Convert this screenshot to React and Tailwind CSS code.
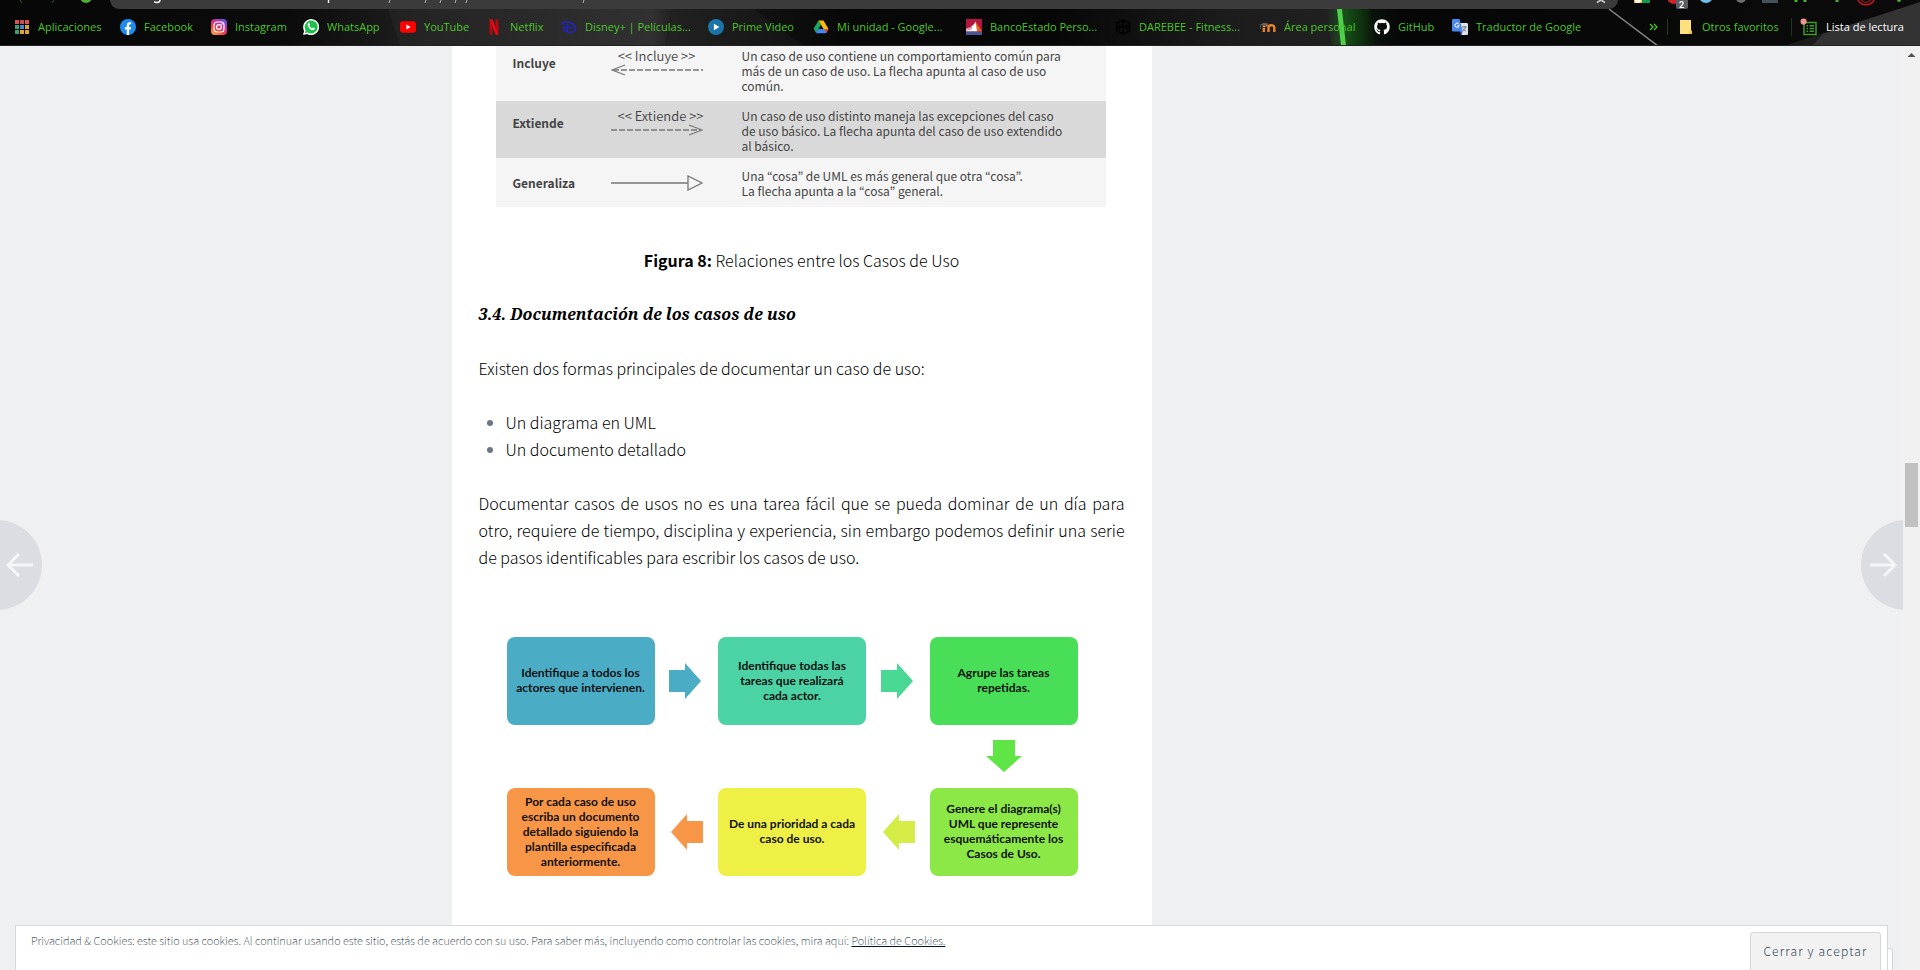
import { FaGithub } from "react-icons/fa";

const iconClass = "h-4 w-4 shrink-0";

function AppsIcon() {
  const colors = ["#d9534f", "#c8504a", "#d9534f", "#3f9e6b", "#4285d4", "#e0a52c", "#3f9e6b", "#e0a52c", "#e0a52c"];
  return (
    <svg viewBox="0 0 16 16" className={iconClass} aria-hidden="true">
      {colors.map((c, i) => (
        <rect key={i} x={1 + (i % 3) * 5} y={1 + Math.floor(i / 3) * 5} width="4" height="4" fill={c} />
      ))}
    </svg>
  );
}

function FacebookIcon() {
  return (
    <svg viewBox="0 0 16 16" className={iconClass} aria-hidden="true">
      <circle cx="8" cy="8" r="8" fill="#1c8cf0" />
      <path d="M6.8 16v-5.6H4.9V8.1h1.9V6.4c0-2 1.1-3.1 2.9-3.1.8 0 1.5.1 1.5.1v1.8h-.9c-.9 0-1.2.6-1.2 1.2v1.7h2.1l-.4 2.3H9.1V16z" fill="#fff" />
    </svg>
  );
}

function InstagramIcon() {
  return (
    <svg viewBox="0 0 16 16" className={iconClass} aria-hidden="true">
      <defs>
        <linearGradient id="ig" x1="0" y1="1" x2="0.7" y2="0">
          <stop offset="0" stopColor="#fdc04e" />
          <stop offset="0.4" stopColor="#f0453c" />
          <stop offset="0.7" stopColor="#c4309a" />
          <stop offset="1" stopColor="#6a4fd0" />
        </linearGradient>
      </defs>
      <rect width="16" height="16" rx="4" fill="url(#ig)" />
      <rect x="3" y="3" width="10" height="10" rx="3" fill="none" stroke="#fff" strokeWidth="1.2" />
      <circle cx="8" cy="8" r="2.4" fill="none" stroke="#fff" strokeWidth="1.2" />
      <circle cx="11" cy="5" r="0.7" fill="#fff" />
    </svg>
  );
}

function WhatsAppIcon() {
  return (
    <svg viewBox="0 0 16 16" className={iconClass} aria-hidden="true">
      <path d="M0 16l1.1-4.1A8 8 0 1 1 4.1 15z" fill="#fff" />
      <path d="M1.9 14.1l.8-2.6A6.5 6.5 0 1 1 4.6 13.4z" fill="#21c04e" />
      <path d="M5.2 4.1c.5-.5 1-.3 1.2.2l.5 1.2c.1.4-.6 1-.6 1.2.5 1.1 1.5 2 2.7 2.5.3.1.8-.9 1.1-.8l1.5.7c.5.3-.1 1.5-.7 1.8-1.2.6-3.1-.2-4.4-1.5C5 8 3.9 5.6 5.2 4.1z" fill="#fff" />
    </svg>
  );
}

function YouTubeIcon() {
  return (
    <svg viewBox="0 0 16 16" className={iconClass} aria-hidden="true">
      <rect x="0" y="2.3" width="16" height="11.4" rx="2.6" fill="#f00" />
      <path d="M6.4 5.6v4.8L10.6 8z" fill="#fff" />
    </svg>
  );
}

function NetflixIcon() {
  return (
    <svg viewBox="0 0 16 16" className={iconClass} aria-hidden="true">
      <path d="M3.5 0.5h3v15l-3 .3zM9.5 0.5h3v15.3l-3-.3z" fill="#b5090f" />
      <path d="M3.5 0.5h3l6 15.3-3-.3z" fill="#e50914" />
    </svg>
  );
}

function DisneyIcon() {
  return (
    <svg viewBox="0 0 16 16" className={iconClass} aria-hidden="true">
      <path d="M1.5 3.8C5 1.5 14.5 4 14.5 9.6c0 3.7-5 4.6-8.3 3.2C3.5 11.6 1.5 9.7 3 8.7c2-1.2 6-.8 8 .6M6 5.6c.4 2.2.5 4.2.3 6.4M1 4.5l1.5 1" fill="none" stroke="#2222c4" strokeWidth="1.5" strokeLinecap="round" />
    </svg>
  );
}

function PrimeIcon() {
  return (
    <svg viewBox="0 0 16 16" className={iconClass} aria-hidden="true">
      <circle cx="8" cy="8" r="8" fill="#1b74a8" />
      <path d="M5.9 4.7v6.6L11.4 8z" fill="#fff" />
    </svg>
  );
}

function DriveIcon() {
  return (
    <svg viewBox="0 0 16 16" className={iconClass} aria-hidden="true">
      <path d="M5.5 1.5L8 5.8 3.2 14 .5 9.8z" fill="#1da462" />
      <path d="M5.5 1.5h5l5 8.4h-5z" fill="#fbbc05" />
      <path d="M5.5 9.9h10L13 14.2H3z" fill="#4285f4" />
      <path d="M13 14.2l2.5-4.3h-4z" fill="#ea4335" />
    </svg>
  );
}

function BancoIcon() {
  return (
    <svg viewBox="0 0 16 16" className={iconClass} aria-hidden="true">
      <rect width="16" height="16" fill="#b3163c" />
      <path d="M9.5 2.5L16 12.5H8z" fill="#e8641e" />
      <path d="M9.5 2.5c-1 3-4 6-9.5 7v3h11z" fill="#fff" />
      <path d="M0 9.5l6-1M0 11.2l6-1.5" stroke="#b3163c" strokeWidth="0.6" />
      <rect y="12.5" width="16" height="3.5" fill="#4b5596" />
    </svg>
  );
}

function DarebeeIcon() {
  return (
    <svg viewBox="0 0 16 16" className={iconClass} aria-hidden="true">
      <path d="M8 .8l6.500 3.500v7.400L8 15.200l-6.500-3.500V4.300zM8 .8v14.400M4.500 5v6.500M11.500 5v6.500M1.500 8h13" fill="none" stroke="#000" strokeWidth="1.6" />
    </svg>
  );
}

function MoodleIcon() {
  return (
    <svg viewBox="0 0 16 16" className={iconClass} aria-hidden="true">
      <path d="M3.8 13V8.5M8.5 13V8.2c0-2.6 5.8-2.6 5.8 0V13M3.8 8c0-1.5 2-2.2 3.4-1.3" fill="none" stroke="#e8842a" strokeWidth="2.4" />
      <path d="M0 5.8l4-2 4.5.9-3 2.3-3-.4z" fill="#6b6055" />
      <path d="M.6 6v4" stroke="#6b6055" strokeWidth="0.8" />
    </svg>
  );
}

function TranslateIcon() {
  return (
    <svg viewBox="0 0 16 16" className={iconClass} aria-hidden="true">
      <path d="M6 4h8.800A1.200 1.200 0 0 1 16 5.200v9.600a1.200 1.200 0 0 1-1.200 1.200H9.500z" fill="#dfe1e5" />
      <path d="M10 8h4.800M12.400 7v1M13.800 8c-.6 2-1.800 3.300-3.200 4.200M11 9.500c.6 1.200 1.700 2.200 2.900 2.700" fill="none" stroke="#5f7089" strokeWidth="0.9" />
      <path d="M1.200 0h6.300l3.300 12.500H1.200A1.200 1.200 0 0 1 0 11.300V1.200A1.200 1.200 0 0 1 1.200 0z" fill="#4a87ee" />
      <path d="M7.600 12.500h3.200L9.300 16z" fill="#2f5fc4" />
      <path d="M6.700 5a2.100 2.100 0 1 0 .4 1.700H5.200" fill="none" stroke="#fff" strokeWidth="1" />
    </svg>
  );
}

function FolderIcon() {
  return (
    <svg viewBox="0 0 16 16" className={iconClass} aria-hidden="true">
      <path d="M2 1h11v11l1 1v2H2z" fill="#ffe07a" />
      <path d="M11 12h2v-1l1 1v3h-3z" fill="#f2c84b" />
    </svg>
  );
}

function ReadingListIcon() {
  return (
    <svg viewBox="0 0 18 18" className="h-[18px] w-[18px] shrink-0" aria-hidden="true">
      <rect x="4" y="4.5" width="12" height="12" fill="none" stroke="#3f9a27" strokeWidth="1.5" />
      <path d="M6.500 7.800h1.500M9.500 7.800h4.500M6.500 10.500h1.500M9.500 10.500h4.500M6.500 13.200h1.500M9.500 13.200h4.500" stroke="#3f9a27" strokeWidth="1.4" />
      <circle cx="3.6" cy="3.6" r="3.1" fill="#f0938c" />
    </svg>
  );
}

const bookmarks = [
  { label: "Aplicaciones", Icon: AppsIcon, width: "w-[106px]" },
  { label: "Facebook", Icon: FacebookIcon, width: "w-[91px]" },
  { label: "Instagram", Icon: InstagramIcon, width: "w-[92px]" },
  { label: "WhatsApp", Icon: WhatsAppIcon, width: "w-[97px]" },
  { label: "YouTube", Icon: YouTubeIcon, width: "w-[86px]" },
  { label: "Netflix", Icon: NetflixIcon, width: "w-[75px]" },
  { label: "Disney+ | Películas...", Icon: DisneyIcon, width: "w-[147px]" },
  { label: "Prime Video", Icon: PrimeIcon, width: "w-[105px]" },
  { label: "Mi unidad - Google...", Icon: DriveIcon, width: "w-[153px]" },
  { label: "BancoEstado Perso...", Icon: BancoIcon, width: "w-[149px]" },
  { label: "DAREBEE - Fitness...", Icon: DarebeeIcon, width: "w-[145px]" },
  { label: "Área personal", Icon: MoodleIcon, width: "w-[114px]" },
  { label: "GitHub", Icon: () => <FaGithub className="h-4 w-4 shrink-0 text-white" aria-hidden="true" />, width: "w-[78px]" },
  { label: "Traductor de Google", Icon: TranslateIcon, width: "w-[140px]" },
];

function ThemeArt() {
  return (
    <svg className="absolute inset-0 h-full w-full" viewBox="0 0 1920 46" preserveAspectRatio="none" aria-hidden="true">
      <defs>
        <linearGradient id="base" x1="0" x2="1" y1="0" y2="0">
          <stop offset="0" stopColor="#060606" />
          <stop offset="0.15" stopColor="#0b0b0b" />
          <stop offset="0.21" stopColor="#1c1c1c" />
          <stop offset="0.34" stopColor="#2b2b2b" />
          <stop offset="0.35" stopColor="#1a1a1a" />
          <stop offset="0.44" stopColor="#080808" />
          <stop offset="0.55" stopColor="#070707" />
          <stop offset="0.64" stopColor="#1c1c1c" />
          <stop offset="0.696" stopColor="#202020" />
          <stop offset="0.705" stopColor="#0c1a0c" />
          <stop offset="0.73" stopColor="#060606" />
          <stop offset="1" stopColor="#0b0b0b" />
        </linearGradient>
        <linearGradient id="glow" x1="0" x2="1" y1="0" y2="0">
          <stop offset="0" stopColor="#1f9a1f" stopOpacity="0" />
          <stop offset="0.4" stopColor="#1f9a1f" stopOpacity="0.4" />
          <stop offset="1" stopColor="#1f9a1f" stopOpacity="0" />
        </linearGradient>
      </defs>
      <rect width="1920" height="46" fill="url(#base)" />
      <path d="M400 46L388 9h284l-7 37z" fill="#fff" fillOpacity="0.03" />
      <path d="M672 9h82l50 37H667z" fill="#fff" fillOpacity="0.03" />
      <path d="M1326 9h44l6 37h-44z" fill="url(#glow)" />
      <path d="M1337 9h5l4 37h-5z" fill="#4fd04a" />
      <path d="M1609 9l49 37" stroke="#8a8a8a" strokeWidth="1.5" />
      <path d="M1785 46l135-44v44z" fill="#333" />
      <path d="M1785 46l40-14-13 14z" fill="#1c1c1c" />
      <rect y="45" width="1920" height="1" fill="#222" />
    </svg>
  );
}

function ToolbarEdge() {
  return (
    <div className="relative flex h-[9px] items-start">
      <svg width="110" height="9" className="shrink-0" aria-hidden="true">
        <path d="M20 0l2 3M54 0l-2 3" stroke="#2f5a25" strokeWidth="1" />
        <circle cx="86" cy="-3" r="6" fill="#4fae33" />
      </svg>
      <div className="h-[9px] flex-1 rounded-b-[14px] bg-[#3b3b3b]">
        <div className="flex justify-between pl-11">
          <svg width="440" height="8" aria-hidden="true">
            <path d="M0 1.5c1.5 1.5 6 1.5 6-1.5" fill="none" stroke="#fff" strokeWidth="1.4" />
            <path d="M174.5 0v3" stroke="#fff" strokeWidth="1.4" />
            <path d="M236 0l-1 3M272 0l-1 3M287 0l-1 3M302 0l-1 3M313 0l-1 3M430 0l-1 3" stroke="#b5b5b5" strokeWidth="1" />
          </svg>
          <svg width="30" height="5" aria-hidden="true">
            <path d="M9 2.5L13 0M17 2.5L13 0" fill="none" stroke="#c8c8c8" strokeWidth="1.6" />
          </svg>
        </div>
      </div>
      <svg width="302" height="18" className="-mb-[9px] shrink-0" aria-hidden="true">
        <path d="M16 0h8v3h-8z" fill="#f2c230" />
        <path d="M24 0h8v3h-8z" fill="#159a4c" />
        <circle cx="20" cy="0" r="3" fill="#fff" />
        <circle cx="56" cy="-3" r="7" fill="#d3202a" />
        <rect x="58" y="-4" width="12" height="13" rx="2" fill="#5b5f63" />
        <text x="61" y="8" fontFamily="Roboto, sans-serif" fontWeight="600" fontSize="9" fill="#fff">2</text>
        <circle cx="88" cy="-4" r="7" fill="#6cc0ee" />
        <circle cx="123" cy="-2" r="5" fill="#6b6b6b" />
        <rect x="144" y="-4" width="16" height="7" fill="#47515c" />
        <path d="M178 0v2M187 0v2M219 0v2" stroke="#4fae33" strokeWidth="3" />
        <circle cx="248" cy="-4" r="9" fill="none" stroke="#c2161c" strokeWidth="1.5" />
        <path d="M243 0l5 3 5-3" fill="none" stroke="#c2161c" strokeWidth="1" />
        <circle cx="281" cy="0" r="2" fill="#4fae33" />
      </svg>
    </div>
  );
}

function BrowserBar() {
  return (
    <header className='relative h-[46px] shrink-0 overflow-hidden bg-black font-["Open_Sans",sans-serif] text-[11px] text-[#4cc52c]'>
      <ThemeArt />
      <ToolbarEdge />
      <nav aria-label="Marcadores" className="relative flex h-9 items-center pr-[14px] pl-[14px]">
        <div className="flex min-w-0 flex-1 overflow-hidden">
          {bookmarks.map(({ label, Icon, width }) => (
            <a key={label} href="#" className={`flex shrink-0 items-center gap-2 whitespace-nowrap ${width}`}>
              <Icon />
              {label}
            </a>
          ))}
        </div>
        <button type="button" aria-label="Más marcadores" className="mr-2 shrink-0">
          <svg width="10" height="8" viewBox="0 0 10 8" aria-hidden="true">
            <path d="M1 1l3 3-3 3M5 1l3 3-3 3" fill="none" stroke="#4cc52c" strokeWidth="1.3" />
          </svg>
        </button>
        <a href="#" className="flex w-[124px] shrink-0 items-center gap-2 border-l border-[#1d3a17] pl-[10px] whitespace-nowrap">
          <FolderIcon />
          Otros favoritos
        </a>
        <a href="#" className="flex w-[115px] shrink-0 items-center gap-2 border-l border-[#1d3a17] pl-2 whitespace-nowrap text-white">
          <ReadingListIcon />
          Lista de lectura
        </a>
      </nav>
    </header>
  );
}

function DashedArrow({ left }) {
  return (
    <svg width="92" height="12" viewBox="0 0 92 12" className="block" aria-hidden="true">
      <path d={left ? "M2 6h90" : "M0 6h90"} stroke="#777" strokeWidth="1.3" strokeDasharray="6 2" />
      <path d={left ? "M14 1L1 6l13 5" : "M78 1l13 5-13 5"} fill="none" stroke="#777" strokeWidth="1.3" />
    </svg>
  );
}

function RelationsTable() {
  return (
    <table className="w-full table-fixed border-collapse text-xs leading-[15px] text-[#444]">
      <colgroup>
        <col className="w-[115px]" />
        <col className="w-[131px]" />
        <col />
      </colgroup>
      <tbody className="align-top">
        <tr className="bg-[#f5f5f5]">
          <th scope="row" className="pt-[9px] pl-[17px] text-left font-bold">Incluye</th>
          <td className="pt-[2px] font-[350]">
            <div className="w-[92px] text-center text-[13px] leading-4 whitespace-nowrap">&lt;&lt; Incluye &gt;&gt;</div>
            <DashedArrow left />
          </td>
          <td className="pt-[2px] pb-2 font-normal">
            Un caso de uso contiene un comportamiento común para<br />
            más de un caso de uso. La flecha apunta al caso de uso<br />
            común.
          </td>
        </tr>
        <tr className="bg-[#d9d9d9]">
          <th scope="row" className="pt-[14px] pl-[17px] text-left font-bold">Extiende</th>
          <td className="pt-[7px] font-[350]">
            <div className="w-[100px] text-center text-[13px] leading-4 whitespace-nowrap">&lt;&lt; Extiende &gt;&gt;</div>
            <DashedArrow />
          </td>
          <td className="pt-[7px] pb-[5px] font-normal">
            Un caso de uso distinto maneja las excepciones del caso<br />
            de uso básico. La flecha apunta del caso de uso extendido<br />
            al básico.
          </td>
        </tr>
        <tr className="bg-[#f5f5f5]">
          <th scope="row" className="pt-[17px] pl-[17px] text-left font-bold">Generaliza</th>
          <td className="pt-[17px]">
            <svg width="92" height="16" viewBox="0 0 92 16" className="block" aria-hidden="true">
              <path d="M0 8h77M77 1v14l14-7z" fill="none" stroke="#777" strokeWidth="1.3" />
            </svg>
          </td>
          <td className="pt-[10px] pb-[9px] font-normal">
            Una “cosa” de UML es más general que otra “cosa”.<br />
            La flecha apunta a la “cosa” general.
          </td>
        </tr>
      </tbody>
    </table>
  );
}

function Step({ className, children }) {
  return (
    <div className={`flex h-[88px] items-center justify-center rounded-lg pb-[2px] text-center ${className}`}>
      <p>{children}</p>
    </div>
  );
}

function StepArrow({ className, fill }) {
  return (
    <svg width="32" height="36" viewBox="0 0 32 36" className={`self-center justify-self-center ${className}`} aria-hidden="true">
      <path d="M0 7h16V0l16 18-16 18v-7H0z" fill={fill} />
    </svg>
  );
}

function StepsDiagram() {
  return (
    <div className='mx-auto grid max-w-[571px] grid-cols-[148px_1fr_148px_1fr_148px] font-["Lato",sans-serif] text-xs leading-[15px] font-bold text-[#111]'>
      <Step className="bg-[#4bacc6]">Identifique a todos los<br />actores que intervienen.</Step>
      <StepArrow fill="#4bacc6" className="mr-[2px]" />
      <Step className="bg-[#4bd3a5]">Identifique todas las<br />tareas que realizará<br />cada actor.</Step>
      <StepArrow fill="#49d893" className="mr-[2px]" />
      <Step className="bg-[#48de57]">Agrupe las tareas<br />repetidas.</Step>

      <div className="col-span-4 h-[63px]" />
      <StepArrow fill="#60e546" className="mb-[2px] rotate-90" />

      <Step className="bg-[#f79646]">Por cada caso de uso<br />escriba un documento<br />detallado siguiendo la<br />plantilla especificada<br />anteriormente.</Step>
      <StepArrow fill="#f79646" className="ml-[2px] rotate-180" />
      <Step className="bg-[#eef046]">De una prioridad a cada<br />caso de uso.</Step>
      <StepArrow fill="#d6ec46" className="ml-[2px] rotate-180" />
      <Step className="bg-[#8ce846]">Genere el diagrama(s)<br />UML que represente<br />esquemáticamente los<br />Casos de Uso.</Step>
    </div>
  );
}

function PageArrow({ side }) {
  const left = side === "left";
  return (
    <a
      href="#"
      aria-label={left ? "Entrada anterior" : "Entrada siguiente"}
      className={`absolute top-[474px] flex size-[90px] items-center rounded-full bg-[#dadde1] ${left ? "-left-12 justify-end pr-2" : "-right-12 justify-start pl-2"}`}
    >
      <svg width="28" height="26" viewBox="0 0 28 26" className={left ? "shrink-0" : "shrink-0 rotate-180"} aria-hidden="true">
        <path d="M27 13H2M13 2L2 13l11 11" fill="none" stroke="#f4f6f8" strokeWidth="3" />
      </svg>
    </a>
  );
}

function CookieBanner() {
  return (
    <div className="absolute right-[10px] bottom-0 left-[15px] h-[45px]">
      <div className="absolute right-0 bottom-0 h-[22px] w-10 rounded-tr-[3px] border-t border-r border-[#cfd5da] bg-white" />
      <div className="relative mr-[5px] flex h-full items-start justify-between overflow-hidden border border-b-0 border-[#d5d9db] bg-white pr-[6px] pl-[15px]">
        <p className="pt-[6px] text-[11px] leading-4 font-thin text-[#001526]">
          Privacidad &amp; Cookies: este sitio usa cookies. Al continuar usando este sitio, estás de acuerdo con su uso. Para saber más, incluyendo como controlar las cookies, mira aquí:{" "}
          <a href="#" className="underline">Política de Cookies.</a>
        </p>
        <button type="button" className="mt-[6px] h-[42px] w-[131px] shrink-0 rounded-t-[3px] border border-[#d5d8da] bg-[#f2f2f2] pb-1 text-xs font-light tracking-widest text-[#2e4453]">
          Cerrar y aceptar
        </button>
      </div>
    </div>
  );
}

export default function App() {
  return (
    <div className='flex h-screen flex-col overflow-hidden bg-[#eff0f2] font-["Noto_Sans_CJK_KR",sans-serif] text-black'>
      <BrowserBar />
      <div className="flex min-h-0 flex-1">
        <main className="relative min-w-0 flex-1 overflow-hidden">
          <div className="mx-auto flex h-full max-w-[1000px]">
            <article className="w-full max-w-[700px] bg-white px-[27px] text-base leading-[27px] font-light">
              <figure>
                <div className="mr-[19px] ml-[17px]">
                  <RelationsTable />
                </div>
                <figcaption className="mt-10 text-center">
                  <strong className="font-bold">Figura 8:</strong> Relaciones entre los Casos de Uso
                </figcaption>
              </figure>
              <h3 className='mt-[27px] font-["Noto_Serif",serif] font-bold italic'>3.4. Documentación de los casos de uso</h3>
              <p className="mt-[27px]">Existen dos formas principales de documentar un caso de uso:</p>
              <ul className="mt-[27px] list-disc pl-[27px] marker:text-[#6b7686]">
                <li>Un diagrama en UML</li>
                <li>Un documento detallado</li>
              </ul>
              <p className="mt-[27px] text-justify">
                Documentar casos de usos no es una tarea fácil que se pueda dominar de un día para otro, requiere de tiempo, disciplina y experiencia, sin embargo podemos definir una serie de pasos identificables para escribir los casos de uso.
              </p>
              <div className="mt-[66px] pr-[19px]">
                <StepsDiagram />
              </div>
            </article>
          </div>
          <PageArrow side="left" />
          <PageArrow side="right" />
          <CookieBanner />
        </main>
        <div className="relative w-[17px] shrink-0 bg-[#f1f1f1]" aria-hidden="true">
          <svg width="17" height="17" viewBox="0 0 17 17" className="block">
            <path d="M4.500 11L8.500 7l4 4z" fill="#505050" />
          </svg>
          <div className="mx-[2px] mt-[400px] h-16 bg-[#c1c1c1]" />
        </div>
      </div>
    </div>
  );
}
